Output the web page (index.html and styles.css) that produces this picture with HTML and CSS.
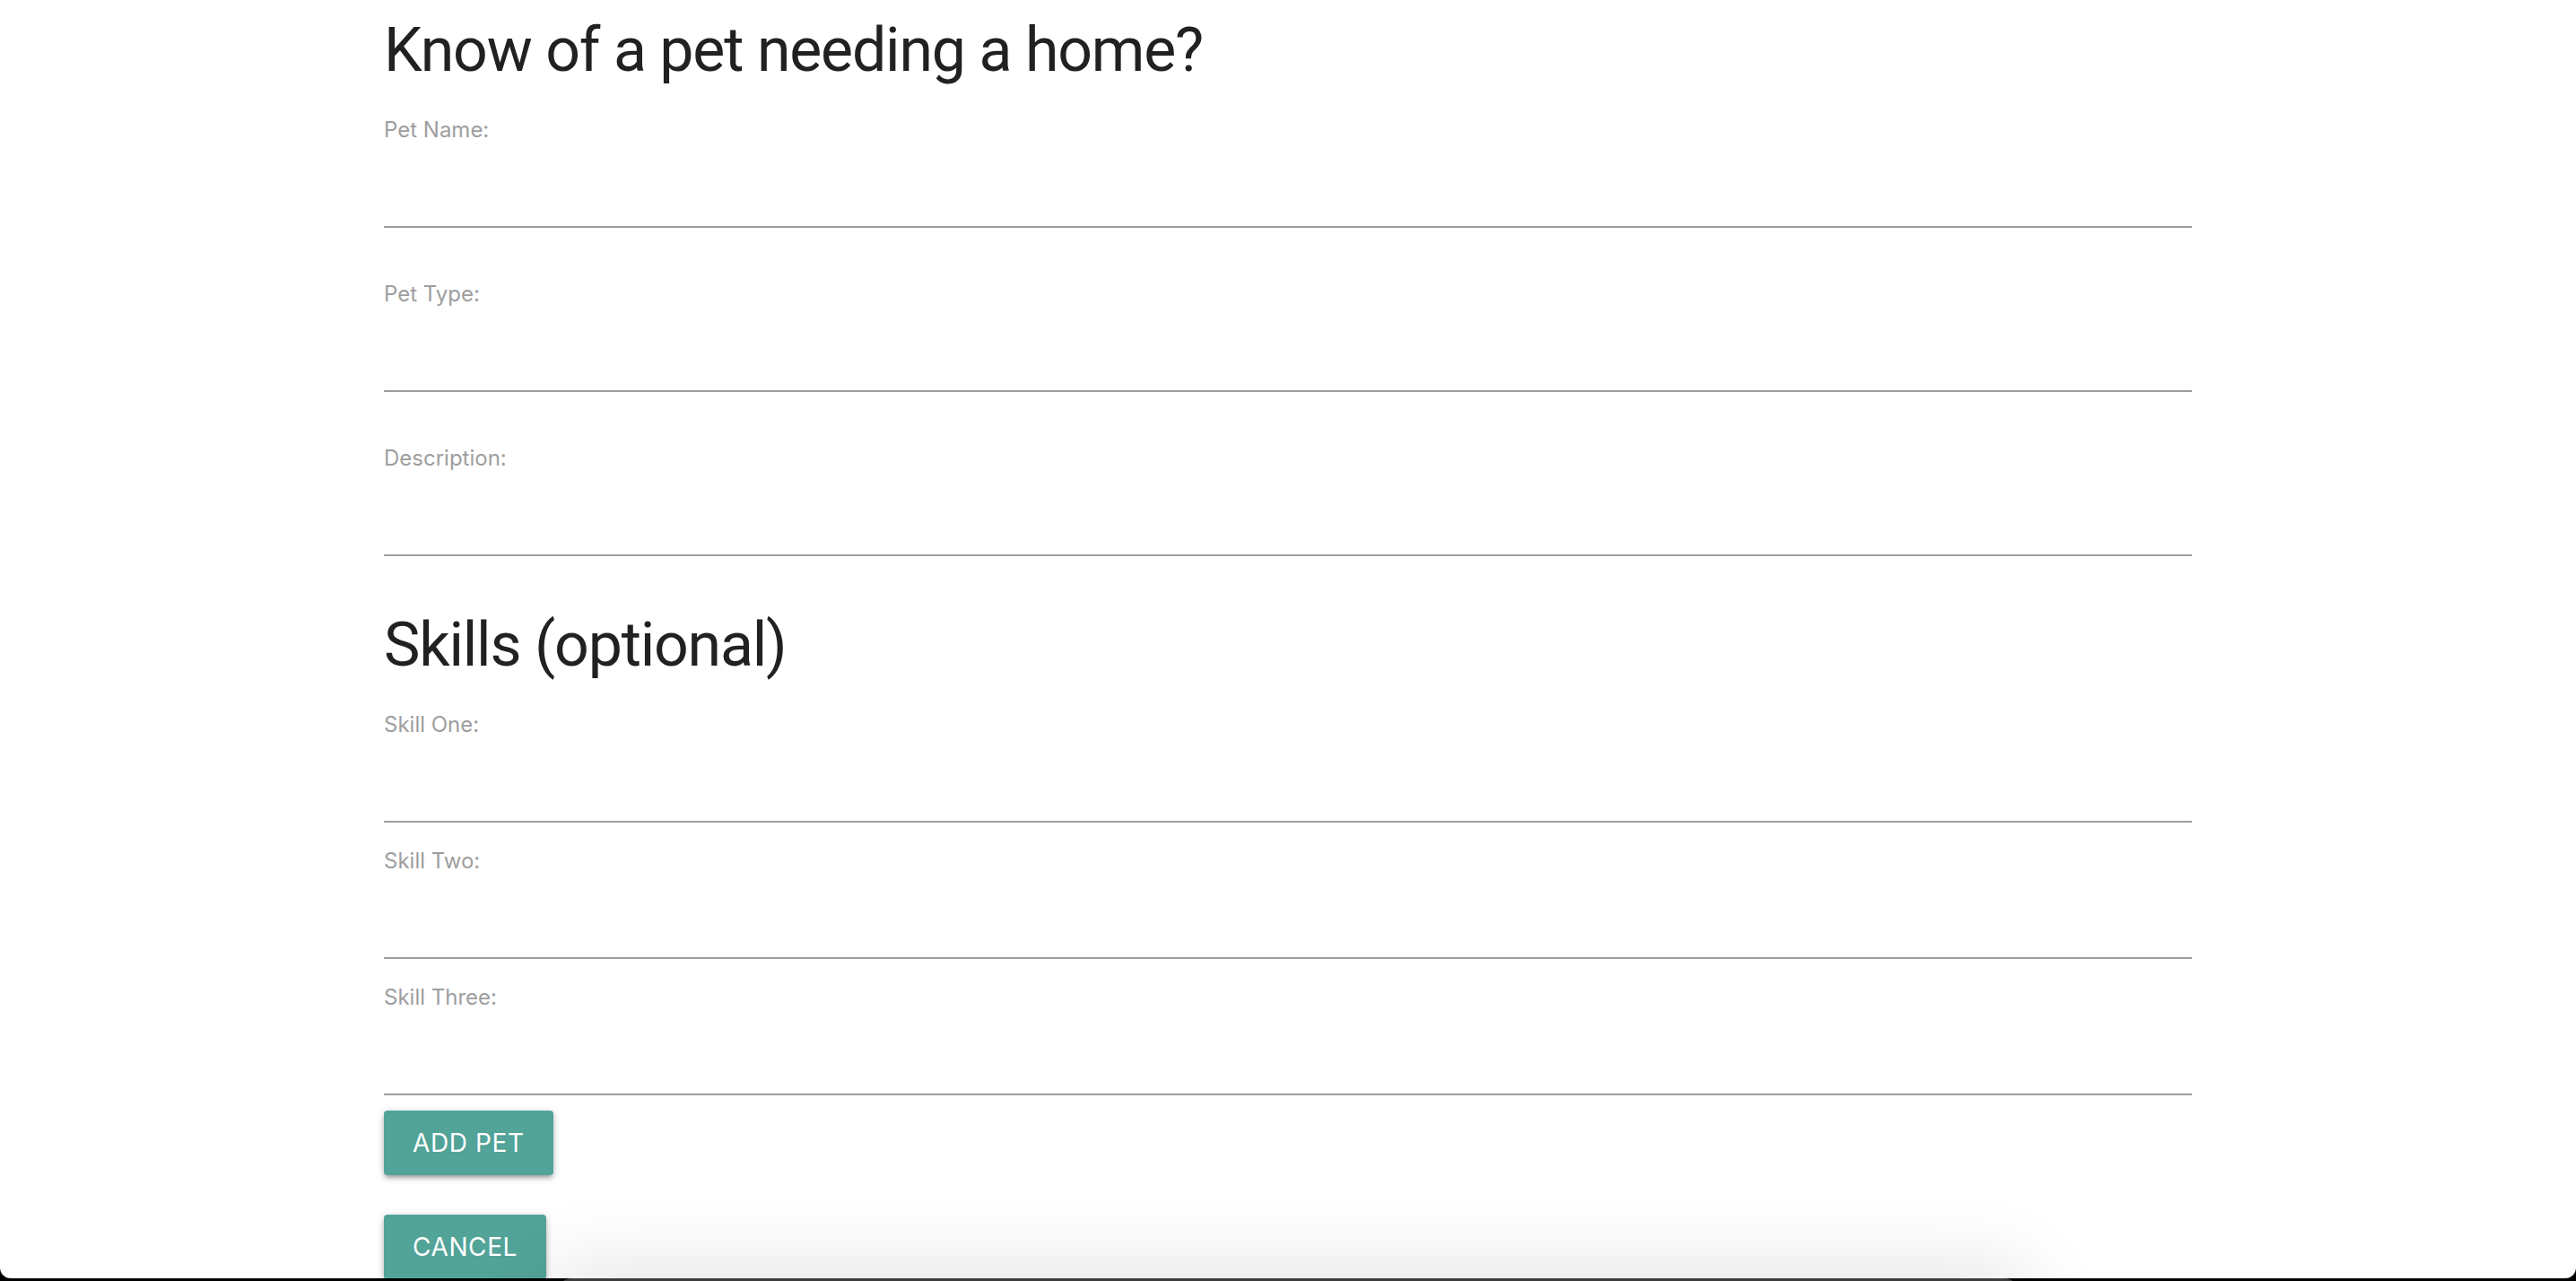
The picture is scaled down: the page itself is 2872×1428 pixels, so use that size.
FILE: index.html
```html
<!DOCTYPE html>
<html lang="en">
<head>
<meta charset="utf-8">
<title>Add a pet</title>
<link rel="stylesheet" href="styles.css">
</head>
<body>
<div class="screen">
  <form class="container">
    <h4 class="title">Know of a pet needing a home?</h4>
    <div class="group group-main">
      <div class="field">
        <label for="petName">Pet Name:</label>
        <input id="petName" type="text">
      </div>
      <div class="field">
        <label for="petType">Pet Type:</label>
        <input id="petType" type="text">
      </div>
      <div class="field">
        <label for="desc">Description:</label>
        <input id="desc" type="text">
      </div>
    </div>
    <h4 class="title title-skills">Skills (optional)</h4>
    <div class="group group-skills">
      <div class="field">
        <label for="s1">Skill One:</label>
        <input id="s1" type="text">
      </div>
      <div class="field">
        <label for="s2">Skill Two:</label>
        <input id="s2" type="text">
      </div>
      <div class="field">
        <label for="s3">Skill Three:</label>
        <input id="s3" type="text">
      </div>
    </div>
    <div class="actions">
      <button type="button" class="btn">Add Pet</button>
      <button type="button" class="btn">Cancel</button>
    </div>
  </form>
</div>
<div class="dock"></div>
</body>
</html>
```

FILE: styles.css
```css
html, body {
  margin: 0;
  padding: 0;
}
body {
  background: #000;
  height: 1428px;
  overflow: hidden;
  position: relative;
  font-family: Inter, "Noto Sans", sans-serif;
}
.screen {
  background: #fff;
  height: 1425px;
  border-radius: 0 0 12px 12px;
  overflow: hidden;
}
.container {
  width: 2016px;
  margin: 0 auto;
  padding-top: 16px;
}
.title {
  font-family: Roboto, "Noto Sans", sans-serif;
  font-weight: 400;
  font-size: 68px;
  line-height: 80px;
  color: #212121;
  margin: 0 0 33px 0;
  letter-spacing: -1.2px;
}
.title-skills {
  margin-top: 59px;
}
.group {
  display: flex;
  flex-direction: column;
}
.group-main {
  gap: 58px;
}
.group-skills {
  gap: 27px;
}
.field {
  display: flex;
  flex-direction: column;
}
.field label {
  font-size: 24px;
  line-height: 32px;
  color: #9e9e9e;
}
.field input {
  display: block;
  box-sizing: border-box;
  width: 100%;
  height: 93px;
  margin: 0;
  padding: 0;
  border: none;
  border-bottom: 2px solid #9e9e9e;
  background: transparent;
  outline: none;
  font-family: inherit;
  font-size: 32px;
  color: #212121;
}
.actions {
  display: flex;
  flex-direction: column;
  align-items: flex-start;
  gap: 44px;
  margin-top: 17px;
}
.btn {
  height: 72px;
  padding: 0 32px;
  border: none;
  border-radius: 4px;
  background: #52a398;
  color: #fff;
  font-family: Inter, "Noto Sans", sans-serif;
  font-size: 28px;
  line-height: 72px;
  letter-spacing: 0.6px;
  text-transform: uppercase;
  box-shadow: 0 4px 4px 0 rgba(0,0,0,.14), 0 6px 2px -4px rgba(0,0,0,.12), 0 2px 10px 0 rgba(0,0,0,.2);
  cursor: pointer;
}
.dock {
  position: absolute;
  left: 620px;
  top: 1425px;
  width: 1632px;
  height: 60px;
  background: #3c3c3c;
  border-radius: 18px 18px 0 0;
  box-shadow: 0 0 90px 10px rgba(0,0,0,.12);
}
```
